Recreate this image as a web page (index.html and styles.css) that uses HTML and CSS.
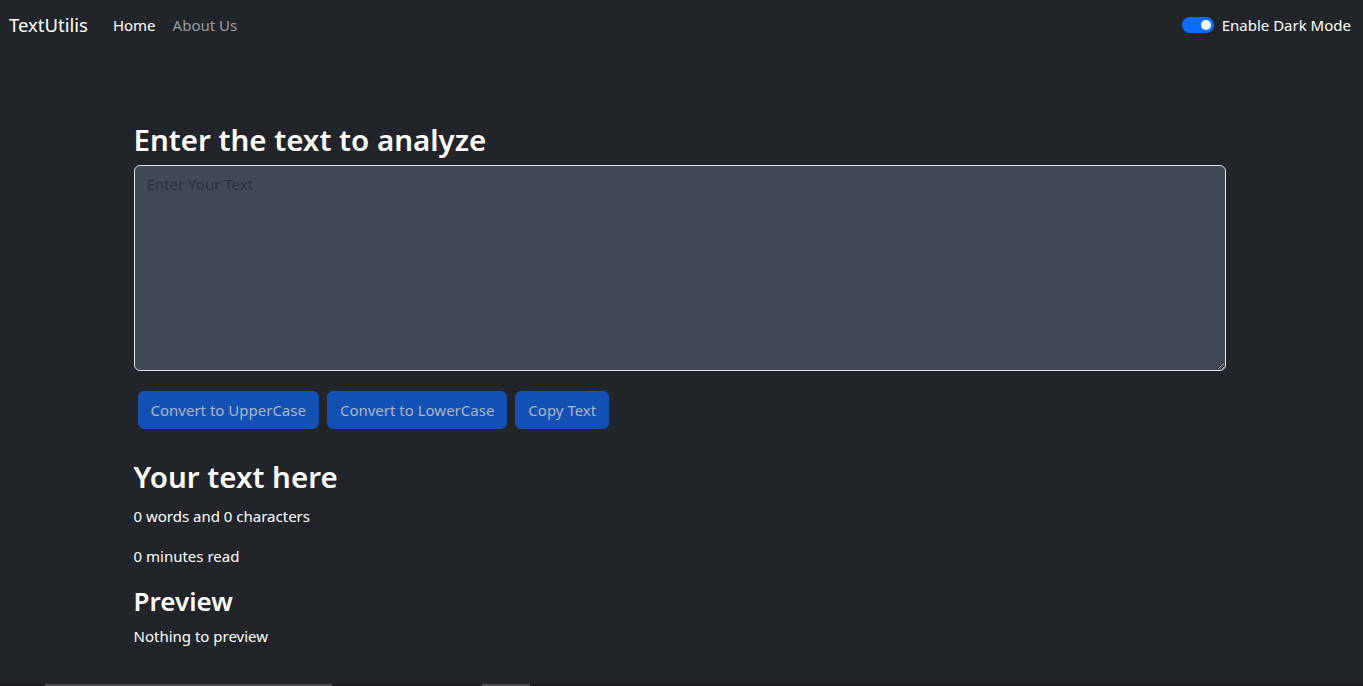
FILE: index.html
```html
<!DOCTYPE html>
<html lang="en">
<head>
<meta charset="utf-8">
<title>TextUtilis</title>
<link rel="stylesheet" href="styles.css">
</head>
<body>
<div class="page">
  <nav class="navbar">
    <a class="brand" href="#">TextUtilis</a>
    <ul class="nav">
      <li><a class="nav-link active" href="#">Home</a></li>
      <li><a class="nav-link" href="#">About Us</a></li>
    </ul>
    <label class="switch">
      <span class="switch-track"><span class="switch-knob"></span></span>
      <span class="switch-label">Enable Dark Mode</span>
    </label>
  </nav>

  <main class="container first">
    <h1 class="title">Enter the text to analyze</h1>
    <div class="field">
      <textarea class="textarea" rows="8" placeholder="Enter Your Text"></textarea>
    </div>
    <div class="buttons">
      <button class="btn">Convert to UpperCase</button>
      <button class="btn">Convert to LowerCase</button>
      <button class="btn">Copy Text</button>
    </div>
  </main>

  <section class="container second">
    <h2 class="title">Your text here</h2>
    <p class="text">0 words and 0 characters</p>
    <p class="text">0 minutes read</p>
    <h3 class="sub">Preview</h3>
    <p class="text">Nothing to preview</p>
  </section>

  <div class="edge">
    <span class="edge-bar edge-a"></span>
    <span class="edge-bar edge-b"></span>
  </div>
</div>
</body>
</html>
```

FILE: styles.css
```css
* { box-sizing: border-box; }
html, body { margin: 0; padding: 0; }
body {
  background: #212529;
  color: #ffffff;
  font-family: "Noto Sans", "Open Sans", sans-serif;
  font-size: 15px;
  line-height: 24px;
  overflow: hidden;
  height: 686px;
}
.page { display: flex; flex-direction: column; height: 686px; }

.navbar {
  display: flex;
  align-items: center;
  height: 50px;
  padding: 0 12px 0 9px;
}
.brand {
  color: #ffffff;
  text-decoration: none;
  font-size: 18.5px;
  margin-right: 25px;
}
.nav { display: flex; list-style: none; margin: 0; padding: 0; gap: 17px; }
.nav-link { color: rgba(255,255,255,0.55); text-decoration: none; font-size: 15px; }
.nav-link.active { color: #ffffff; }
.switch { margin-left: auto; display: flex; align-items: center; gap: 8px; font-size: 15px; }
.switch-track {
  width: 32px; height: 16px; border-radius: 8px;
  background: #0d6efd;
  display: flex; align-items: center; justify-content: flex-end;
  padding-right: 3px;
}
.switch-knob { width: 10px; height: 10px; border-radius: 50%; background: #fff; }

.container { width: 1092px; margin-left: calc(50% - 548px); }
.first { margin-top: 71px; }
.title {
  font-size: 29.5px;
  line-height: 38px;
  font-weight: 600;
  margin: 0 0 8px;
}
.first .title { margin-bottom: 6px; }
.field { margin-bottom: 16px; }
.textarea {
  display: block;
  width: 100%;
  height: 206px;
  background: #424857;
  border: 1px solid #dee2e6;
  border-radius: 6px;
  padding: 6px 12px;
  font-family: inherit;
  font-size: 15px;
  line-height: 24px;
  color: #fff;
  resize: vertical;
}
.textarea::placeholder { color: #2b2f38; }
.buttons { display: flex; gap: 8px; padding: 4px 4px; }
.btn {
  height: 38px;
  padding: 0 12px;
  border: 1px solid #1352b4;
  border-radius: 6px;
  background: #1352b4;
  color: #adb5c3;
  font-family: inherit;
  font-size: 15px;
}
.second { margin-top: 25px; }
.second .title { margin-bottom: 8px; }
.text { margin: 0 0 16px; }
.sub { font-size: 26px; line-height: 33px; font-weight: 600; margin: 17px 0 6px; }

.edge {
  margin-top: auto;
  height: 2px;
  background: #1a1c1f;
  display: flex;
}
.edge-bar { height: 2px; background: #4a4c50; }
.edge-a { margin-left: 45px; width: 287px; }
.edge-b { margin-left: 150px; width: 48px; }
```
